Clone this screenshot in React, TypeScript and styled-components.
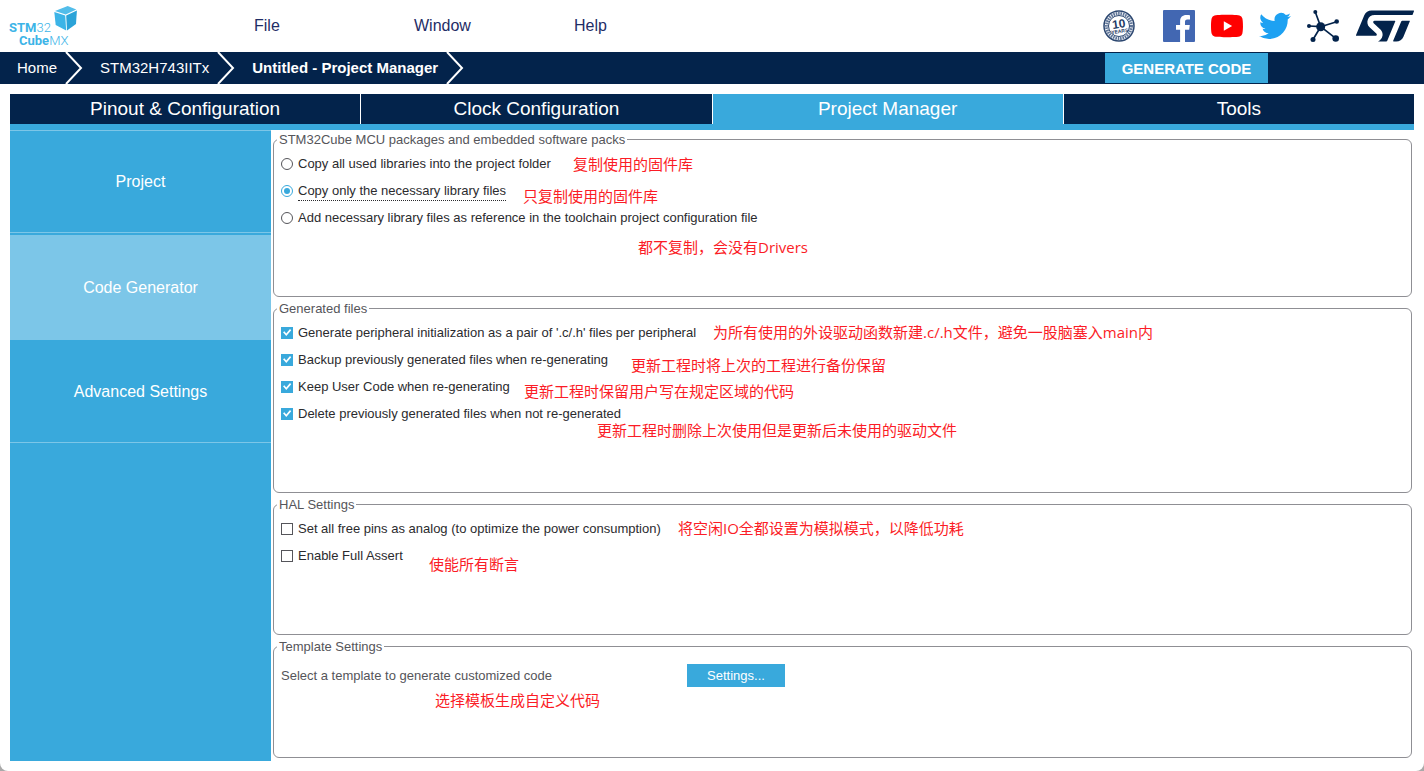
import React from "react";
import styled, { createGlobalStyle } from "styled-components";
import { SiStmicroelectronics } from "react-icons/si";

const navy = "#03234b";
const blue = "#39a9dc";
const pale = "#7cc6e8";

const GlobalStyle = createGlobalStyle`
  * { box-sizing: border-box; }
  body {
    margin: 0;
    background: #a9a9a9;
    font-family: "Liberation Sans", Arial, sans-serif;
  }
  button { font-family: inherit; }
`;

const Window = styled.div`
  display: flex;
  flex-direction: column;
  min-height: 100vh;
  background: #fff;
  border-radius: 0 0 8px 8px;
`;

const Header = styled.header`
  display: flex;
  align-items: center;
  height: 52px;
  padding: 0 9px;
`;

const LogoLink = styled.a`
  display: flex;
  width: 245px;
`;

const Menu = styled.nav`
  display: flex;
  flex: 1;
`;

const MenuButton = styled.button`
  width: 160px;
  padding: 0;
  border: 0;
  background: none;
  color: #1f2d66;
  font-size: 16px;
  line-height: 20px;
  text-align: left;
`;

const Social = styled.div`
  display: flex;
  align-items: center;
  gap: 16px;
`;

const IconLink = styled.a<{ $wide?: boolean }>`
  display: flex;
  margin-right: ${(p) => (p.$wide ? "12px" : "0")};
`;

const StLogo = styled(SiStmicroelectronics)`
  width: 60px;
  height: 32px;
  color: ${navy};
`;

const CrumbBar = styled.div`
  display: flex;
  align-items: center;
  justify-content: space-between;
  height: 32px;
  padding-right: 156px;
  background: ${navy};
`;

const Crumbs = styled.nav`
  display: flex;
  align-items: center;
  padding-left: 17px;
`;

const Crumb = styled.a<{ $current?: boolean }>`
  color: #fff;
  font-size: 15px;
  line-height: 20px;
  font-weight: ${(p) => (p.$current ? 700 : 400)};
  text-decoration: none;
`;

const ChevronBox = styled.svg`
  width: 18px;
  height: 32px;
  margin: 0 17px 0 8px;
`;

const GenerateButton = styled.button`
  width: 163px;
  height: 30px;
  padding: 0;
  border: 0;
  background: ${blue};
  color: #fff;
  font-size: 15px;
  font-weight: 700;
`;

const Main = styled.main`
  display: flex;
  flex: 1;
  flex-direction: column;
  padding: 10px;
`;

const Tabs = styled.div`
  display: grid;
  grid-template-columns: repeat(4, 1fr);
  gap: 1px;
`;

const Tab = styled.button<{ $active?: boolean }>`
  height: 30px;
  padding: 0;
  border: 0;
  background: ${(p) => (p.$active ? blue : navy)};
  color: #fff;
  font-size: 19px;
`;

const Workspace = styled.div`
  display: flex;
  flex: 1;
  border-top: 6px solid ${blue};
`;

const Sidebar = styled.nav`
  width: 261px;
  background: ${blue};
`;

const SideButton = styled.button<{ $active?: boolean }>`
  display: block;
  width: 100%;
  height: ${(p) => (p.$active ? "105px" : "103px")};
  margin-bottom: ${(p) => (p.$active ? "0" : "2px")};
  padding: 0;
  border: 0;
  border-top: 1px solid ${(p) => (p.$active ? pale : "transparent")};
  border-bottom: 1px solid ${pale};
  background: ${(p) => (p.$active ? pale : blue)};
  color: #fff;
  font-size: 16px;

  &:first-child {
    border-top-color: ${pale};
  }
`;

const Panel = styled.section`
  display: flex;
  flex: 1;
  flex-direction: column;
  gap: 3px;
  padding: 1px 2px 3px;
`;

const Group = styled.fieldset<{ $size: number }>`
  position: relative;
  flex: ${(p) => p.$size} 0 ${(p) => p.$size}px;
  min-width: 0;
  margin: 0;
  padding: 3px 3px 0;
  border: 1px solid #8f8f94;
  border-radius: 6px;
`;

const Legend = styled.legend`
  padding: 2px 2px 0;
  color: #55555a;
  font-size: 13px;
  line-height: 14px;
`;

const Option = styled.label`
  display: flex;
  align-items: center;
  gap: 5px;
  width: max-content;
  height: 27px;
  padding-left: 4px;
  color: #2b2b2e;
  font-size: 13px;
  line-height: 18px;
`;

const OptionText = styled.span<{ $focused?: boolean }>`
  padding-top: 2px;
  border-bottom: 1px dotted ${(p) => (p.$focused ? "#2b2b2e" : "transparent")};
`;

const Radio = styled.input.attrs({ type: "radio" })`
  appearance: none;
  display: grid;
  place-items: center;
  width: 12px;
  height: 12px;
  margin: 0;
  border: 1px solid #55555a;
  border-radius: 50%;

  &:checked {
    border-color: ${blue};
  }
  &:checked::before {
    content: "";
    width: 6px;
    height: 6px;
    border-radius: 50%;
    background: ${blue};
  }
`;

const Checkbox = styled.input.attrs({ type: "checkbox" })`
  appearance: none;
  display: grid;
  place-items: center;
  width: 12px;
  height: 12px;
  margin: 0;
  border: 1px solid #55555a;

  &:checked {
    border-color: ${blue};
    background: ${blue};
  }
  &:checked::before {
    content: "";
    width: 10px;
    height: 10px;
    background: #fff;
    clip-path: polygon(10% 48%, 24% 38%, 42% 60%, 80% 16%, 92% 28%, 43% 86%);
  }
`;

const TemplateRow = styled.div`
  display: flex;
  align-items: center;
  height: 36px;
  padding-left: 4px;
  color: #55555a;
  font-size: 13px;
`;

const TemplateText = styled.span`
  width: 406px;
`;

const SettingsButton = styled.button`
  width: 98px;
  height: 23px;
  padding: 0;
  border: 0;
  background: ${blue};
  color: #fff;
  font-size: 13px;
`;

/* Red remarks pinned freely over the settings groups. */
const Note = styled.span<{ $x: number; $y: number }>`
  position: absolute;
  left: ${(p) => p.$x}px;
  top: ${(p) => p.$y}px;
  color: #fb1c26;
  font-family: "Open Sans", "Noto Sans CJK SC", sans-serif;
  font-size: 15px;
  line-height: 20px;
  white-space: nowrap;
`;

type NoteData = { x: number; y: number; text: string };

const Notes = ({ items }: { items: NoteData[] }) => (
  <>
    {items.map((n) => (
      <Note key={n.text} $x={n.x} $y={n.y}>
        {n.text}
      </Note>
    ))}
  </>
);

const libraryOptions = [
  "Copy all used libraries into the project folder",
  "Copy only the necessary library files",
  "Add necessary library files as reference in the toolchain project configuration file",
];
const fileOptions = [
  "Generate peripheral initialization as a pair of '.c/.h' files per peripheral",
  "Backup previously generated files when re-generating",
  "Keep User Code when re-generating",
  "Delete previously generated files when not re-generated",
];
const halOptions = [
  "Set all free pins as analog (to optimize the power consumption)",
  "Enable Full Assert",
];

const Logo = () => (
  <svg width="70" height="42" viewBox="0 0 70 42" role="img" aria-label="STM32 CubeMX">
    <g fill="#3cb4e7" fontFamily="Roboto, sans-serif" fontSize="13" fontWeight="700">
      <text x="0" y="27">STM<tspan fontWeight="300">32</tspan></text>
      <text x="10" y="40">Cube<tspan fontWeight="300">MX</tspan></text>
    </g>
    <path d="M58.700 1 67.300 4.600 56.700 9.400 46 6Z" fill="#52bdea" />
    <path d="M45.300 7 56.200 10.400 57.200 25.500 46.700 20Z" fill="#3cb4e7" />
    <path d="M57.200 10.400 67.900 5.600 67 19 58 25.500Z" fill="#2ba3d8" />
  </svg>
);

const Badge = () => (
  <svg width="32" height="32" viewBox="0 0 32 32" role="img" aria-label="10 years">
    <circle cx="16" cy="16" r="15" fill="#fff" stroke="#2c4770" strokeWidth="1.500" />
    <circle cx="16" cy="16" r="12.500" fill="none" stroke="#5f7598" strokeWidth="3" strokeDasharray="1.600 0.800" />
    <circle cx="16" cy="16" r="10.500" fill="#fff" stroke="#2c4770" />
    <g fill="#1f3b66" fontFamily="Liberation Sans, sans-serif" fontWeight="700" textAnchor="middle" transform="rotate(-8 16 16)">
      <text x="16" y="18" fontSize="12">10</text>
      <text x="16" y="23" fontSize="5">YEARS</text>
    </g>
  </svg>
);

const Facebook = () => (
  <svg width="32" height="32" viewBox="0 0 32 32" role="img" aria-label="Facebook">
    <rect width="32" height="32" rx="1" fill="#4267b2" />
    <path d="M22 32V19.800h4.200l.6-4.900H22v-3c0-1.400.4-2.400 2.400-2.400H27V5.200C26.500 5.100 25 5 23.300 5c-3.700 0-6.200 2.200-6.200 6.300v3.600H13v4.900h4.100V32Z" fill="#fff" />
  </svg>
);

const YouTube = () => (
  <svg width="32" height="32" viewBox="0 0 32 32" role="img" aria-label="YouTube">
    <path d="M31.300 8.300a4 4 0 0 0-2.800-2.800C26 4.800 16 4.800 16 4.800s-10 0-12.500.7A4 4 0 0 0 .7 8.300C0 10.800 0 16 0 16s0 5.200.7 7.700a4 4 0 0 0 2.800 2.800c2.500.7 12.500.7 12.500.7s10 0 12.500-.7a4 4 0 0 0 2.800-2.800c.7-2.500.7-7.700.7-7.700s0-5.200-.7-7.700Z" fill="#f00" />
    <path d="m12.800 20.800 8.300-4.800-8.300-4.800Z" fill="#fff" />
  </svg>
);

const Twitter = () => (
  <svg width="32" height="32" viewBox="0 0 24 24" role="img" aria-label="Twitter">
    <path d="M23.950 4.570a10 10 0 0 1-2.820.77 4.960 4.960 0 0 0 2.160-2.720c-.95.550-2 .950-3.130 1.180a4.920 4.920 0 0 0-8.380 4.480C7.690 8.090 4.070 6.130 1.640 3.160a4.920 4.920 0 0 0 1.520 6.570 4.900 4.900 0 0 1-2.230-.61v.06a4.920 4.920 0 0 0 3.950 4.830 5 5 0 0 1-2.210.08 4.940 4.940 0 0 0 4.600 3.420A9.870 9.870 0 0 1 0 19.540a13.990 13.990 0 0 0 7.550 2.210c9.050 0 14-7.500 14-13.980 0-.21 0-.42-.02-.63a9.940 9.940 0 0 0 2.460-2.550Z" fill="#1da1f2" />
  </svg>
);

const Community = () => (
  <svg width="32" height="32" viewBox="0 0 32 32" role="img" aria-label="Community">
    <path d="M13.700 16.700 8.300 2M13.700 16.700 2 16M13.700 16.700l16-5M13.700 16.700 6 29.500M13.700 16.700l15 11.600" stroke={navy} strokeWidth="1.700" fill="none" />
    <g fill={navy}>
      <circle cx="13.700" cy="16.700" r="4.500" />
      <circle cx="8.300" cy="2" r="2" />
      <circle cx="2" cy="16" r="2" />
      <circle cx="29.700" cy="11.500" r="2.300" />
      <circle cx="6" cy="29.500" r="2.500" />
      <circle cx="28.700" cy="28.500" r="3.300" />
    </g>
  </svg>
);

const Chevron = () => (
  <ChevronBox viewBox="0 0 18 32" aria-hidden="true">
    <path d="M1 0 16 16 1 32" fill="none" stroke="#fff" strokeWidth="2" />
  </ChevronBox>
);

export default function App() {
  return (
    <>
      <GlobalStyle />
      <Window>
        <Header>
          <LogoLink href="#home"><Logo /></LogoLink>
          <Menu>
            <MenuButton>File</MenuButton>
            <MenuButton>Window</MenuButton>
            <MenuButton>Help</MenuButton>
          </Menu>
          <Social>
            <IconLink href="#anniversary" $wide><Badge /></IconLink>
            <IconLink href="#facebook"><Facebook /></IconLink>
            <IconLink href="#youtube"><YouTube /></IconLink>
            <IconLink href="#twitter"><Twitter /></IconLink>
            <IconLink href="#community"><Community /></IconLink>
            <IconLink href="#st" aria-label="ST">
              <StLogo viewBox="0 5.400 24 13.200" />
            </IconLink>
          </Social>
        </Header>

        <CrumbBar>
          <Crumbs aria-label="Breadcrumb">
            <Crumb href="#home">Home</Crumb>
            <Chevron />
            <Crumb href="#mcu">STM32H743IITx</Crumb>
            <Chevron />
            <Crumb href="#project" $current>Untitled - Project Manager</Crumb>
            <Chevron />
          </Crumbs>
          <GenerateButton>GENERATE CODE</GenerateButton>
        </CrumbBar>

        <Main>
          <Tabs>
            <Tab>Pinout &amp; Configuration</Tab>
            <Tab>Clock Configuration</Tab>
            <Tab $active>Project Manager</Tab>
            <Tab>Tools</Tab>
          </Tabs>
          <Workspace>
            <Sidebar>
              <SideButton>Project</SideButton>
              <SideButton $active>Code Generator</SideButton>
              <SideButton>Advanced Settings</SideButton>
            </Sidebar>
            <Panel>
              <Group $size={166}>
                <Legend>STM32Cube MCU packages and embedded software packs</Legend>
                {libraryOptions.map((text, i) => (
                  <Option key={text}>
                    <Radio name="library" defaultChecked={i === 1} />
                    <OptionText $focused={i === 1}>{text}</OptionText>
                  </Option>
                ))}
                <Notes
                  items={[
                    { x: 299, y: 7, text: "复制使用的固件库" },
                    { x: 249, y: 39, text: "只复制使用的固件库" },
                    { x: 364, y: 90, text: "都不复制，会没有Drivers" },
                  ]}
                />
              </Group>
              <Group $size={193}>
                <Legend>Generated files</Legend>
                {fileOptions.map((text) => (
                  <Option key={text}>
                    <Checkbox defaultChecked />
                    <OptionText>{text}</OptionText>
                  </Option>
                ))}
                <Notes
                  items={[
                    { x: 439, y: 6, text: "为所有使用的外设驱动函数新建.c/.h文件，避免一股脑塞入main内" },
                    { x: 357, y: 39, text: "更新工程时将上次的工程进行备份保留" },
                    { x: 250, y: 65, text: "更新工程时保留用户写在规定区域的代码" },
                    { x: 323, y: 104, text: "更新工程时删除上次使用但是更新后未使用的驱动文件" },
                  ]}
                />
              </Group>
              <Group $size={139}>
                <Legend>HAL Settings</Legend>
                {halOptions.map((text) => (
                  <Option key={text}>
                    <Checkbox />
                    <OptionText>{text}</OptionText>
                  </Option>
                ))}
                <Notes
                  items={[
                    { x: 404, y: 6, text: "将空闲IO全都设置为模拟模式，以降低功耗" },
                    { x: 155, y: 42, text: "使能所有断言" },
                  ]}
                />
              </Group>
              <Group $size={120}>
                <Legend>Template Settings</Legend>
                <TemplateRow>
                  <TemplateText>Select a template to generate customized code</TemplateText>
                  <SettingsButton>Settings...</SettingsButton>
                </TemplateRow>
                <Notes items={[{ x: 161, y: 36, text: "选择模板生成自定义代码" }]} />
              </Group>
            </Panel>
          </Workspace>
        </Main>
      </Window>
    </>
  );
}
